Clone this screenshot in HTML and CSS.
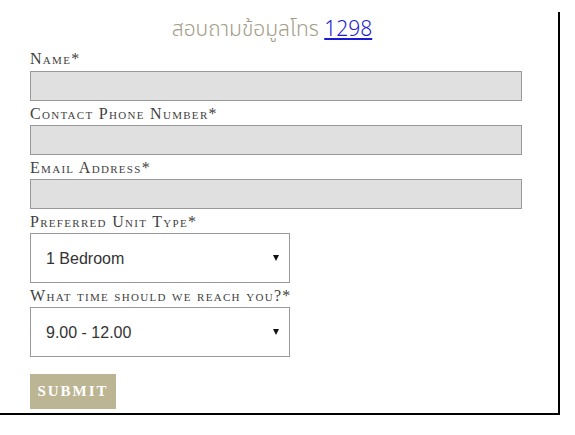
FILE: index.html
```html
<!DOCTYPE html>
<html lang="th">
<head>
<meta charset="utf-8">
<link rel="stylesheet" href="styles.css">
</head>
<body>
<div class="panel">
  <h2 class="title">สอบถามข้อมูลโทร <a href="#" class="phone">1298</a></h2>
  <form class="form">
    <label class="label">Name*</label>
    <input class="field" type="text">
    <label class="label">Contact Phone Number*</label>
    <input class="field" type="text">
    <label class="label">Email Address*</label>
    <input class="field" type="text">
    <label class="label">Preferred Unit Type*</label>
    <span class="select-wrap">
      <select class="select"><option>1 Bedroom</option></select>
    </span>
    <label class="label">What time should we reach you?*</label>
    <span class="select-wrap">
      <select class="select"><option>9.00 - 12.00</option></select>
    </span>
    <button class="submit" type="button">Submit</button>
  </form>
</div>
</body>
</html>
```
FILE: styles.css
```css
html, body {
  margin: 0;
  padding: 0;
  background: #fff;
}
body {
  padding-top: 12px;
}
.panel {
  width: 558px;
  height: 401px;
  border-right: 2px solid #000;
  border-bottom: 2px solid #000;
  box-sizing: content-box;
}
.title {
  margin: 0;
  padding-top: 4px;
  height: 34px;
  text-align: center;
  font-family: "Noto Sans Thai", "Noto Sans", "DejaVu Sans", sans-serif;
  font-weight: 300;
  font-size: 21px;
  line-height: 28px;
  color: #a39d88;
  padding-right: 14px;
}
.phone {
  color: #1b1bd4;
  text-decoration: underline;
}
.form {
  display: flex;
  flex-direction: column;
  align-items: flex-start;
  padding-left: 30px;
}
.label {
  display: block;
  font-family: "Liberation Serif", serif;
  font-variant: small-caps;
  font-size: 16px;
  line-height: 18px;
  letter-spacing: 1.3px;
  color: #3f3f3f;
  margin-top: 4px;
  margin-bottom: 2px;
}
.label:first-child {
  margin-top: 0;
  margin-bottom: 3px;
}
.field {
  width: 492px;
  height: 30px;
  box-sizing: border-box;
  margin: 0;
  border: 1px solid #999;
  background: #e0e0e0;
  border-radius: 0;
}
.select-wrap {
  position: relative;
  display: block;
}
.select-wrap::after {
  content: "";
  position: absolute;
  right: 11px;
  top: 22px;
  border-left: 3px solid transparent;
  border-right: 3px solid transparent;
  border-top: 6px solid #111;
}
.select {
  -webkit-appearance: none;
  appearance: none;
  width: 260px;
  height: 50px;
  box-sizing: border-box;
  margin: 0;
  border: 1px solid #999;
  border-radius: 0;
  background: #fff;
  padding: 0 0 0 15px;
  font-family: "Liberation Sans", Arial, sans-serif;
  font-size: 16px;
  color: #333;
}
.submit {
  margin-top: 17px;
  width: 86px;
  height: 35px;
  border: 0;
  border-radius: 0;
  background: #bcb593;
  color: #fff;
  font-family: "Liberation Serif", serif;
  font-weight: bold;
  font-size: 15px;
  letter-spacing: 2px;
  text-transform: uppercase;
  padding: 0;
}
```
